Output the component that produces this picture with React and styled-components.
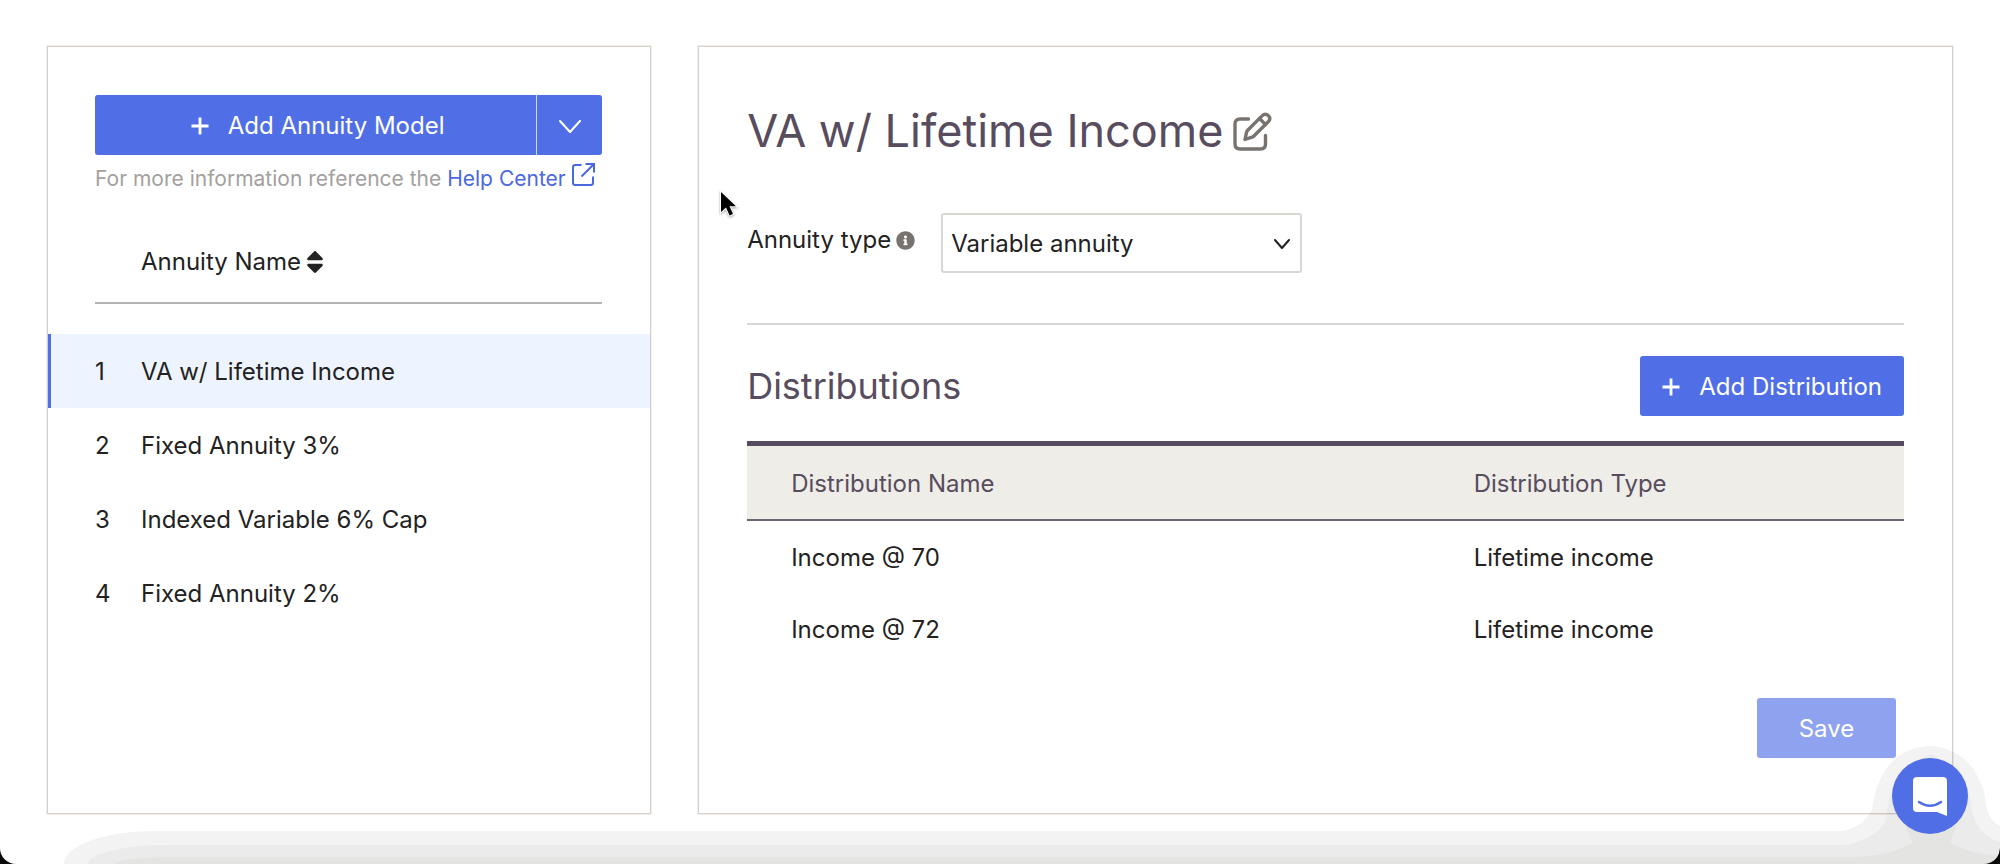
import React, {useState} from 'react';
import styled, {createGlobalStyle} from 'styled-components'
import {FaInfoCircle, FaSort} from 'react-icons/fa'

const GlobalStyle = createGlobalStyle`
  * {
    box-sizing: border-box;
  }
  html {
    background: #0b0b0b;
  }
  body {
    margin: 0;
    font-family: Inter, "Liberation Sans", sans-serif;
    font-size: 24px;
    line-height: 32px;
    color: #222;
  }
  button, select {
    font: inherit;
    color: inherit;
  }
`

const Page = styled.main`
  display: grid;
  grid-template-columns: minmax(0, 13fr) minmax(0, 27fr);
  gap: 47px;
  min-height: 100vh;
  padding: 46px 47px 50px;
  background: #fff;
  border-radius: 0 0 16px 16px;
`

const Panel = styled.section`
  border: 1px solid #d6d0ca;
  outline: 1px solid #f1eeeb;
`

const SidePanel = styled(Panel)`
  padding: 48px 0;
`

const SideInner = styled.div`
  padding: 0 48px 0 47px;
`

const DetailPanel = styled(Panel)`
  padding: 56px 48px 55px;
`

const Button = styled.button`
  display: inline-flex;
  align-items: center;
  justify-content: center;
  gap: ${({$gap}) => $gap || 0}px;
  height: 60px;
  padding: 2px ${({$pad}) => $pad || 0}px 0;
  border: 0;
  border-radius: 3px;
  background: #506fe6;
  color: #fff;
  cursor: pointer;
  &:disabled {
    background: #8ea2f0;
    color: #fff;
    cursor: default;
  }
`

const SplitButton = styled.div`
  display: flex;
  gap: 1px;
  background: #d5d3dc;
  border-radius: 3px;
`

const SplitMain = styled(Button)`
  flex: 1;
  padding-left: 4px;
  border-radius: 3px 0 0 3px;
`

const SplitToggle = styled(Button)`
  width: 65px;
  border-radius: 0 3px 3px 0;
`

const HelpText = styled.p`
  margin: 8px 0 0;
  font-size: 21px;
  line-height: 29px;
  color: #a3a09e;
  white-space: nowrap;
`

const HelpLink = styled.a`
  color: #4a68e0;
  text-decoration: none;
  svg {
    margin-left: 6px;
  }
`

const ListHeader = styled.div`
  display: flex;
  align-items: center;
  height: 85px;
  margin-top: 26px;
  padding-left: 46px;
  border-bottom: 2px solid #b5b3b2;
`

const SortButton = styled.button`
  display: flex;
  align-items: center;
  padding: 2px 0 0;
  border: 0;
  background: none;
  cursor: pointer;
`

const AnnuityList = styled.ol`
  list-style: none;
  margin: 30px 0 0;
  padding: 0;
`

const AnnuityItem = styled.button`
  display: grid;
  grid-template-columns: 46px 1fr;
  align-items: center;
  width: 100%;
  height: 74px;
  padding: 2px 48px 0 44px;
  border: 0;
  border-left: 3px solid ${({$active}) => $active ? '#506fe6' : 'transparent'};
  background: ${({$active}) => $active ? '#eef4ff' : 'transparent'};
  text-align: left;
  cursor: pointer;
`

const TitleRow = styled.header`
  display: flex;
  align-items: center;
  gap: 10px;
`

const Title = styled.h1`
  margin: 0;
  font-size: 45px;
  line-height: 56px;
  font-weight: 400;
  color: #584c5f;
`

const IconButton = styled.button`
  display: flex;
  padding: 0;
  border: 0;
  background: none;
  color: #78736f;
  cursor: pointer;
`

const Field = styled.div`
  display: flex;
  align-items: flex-start;
  gap: 26px;
  margin-top: 54px;
  padding-bottom: 50px;
  border-bottom: 2px solid #dad7d4;
`

const FieldLabel = styled.label`
  display: flex;
  align-items: center;
  gap: 5px;
  padding-top: 11px;
  svg {
    color: #78736f;
  }
`

const SelectWrap = styled.div`
  position: relative;
  width: 361px;
  svg {
    position: absolute;
    top: 26px;
    right: 12px;
    pointer-events: none;
  }
`

const Select = styled.select`
  appearance: none;
  width: 100%;
  height: 60px;
  padding: 2px 40px 0 8px;
  border: 2px solid #dad6d2;
  border-radius: 3px;
  background: #fff;
`

const SectionRow = styled.div`
  display: flex;
  align-items: center;
  justify-content: space-between;
  margin: 31px 0 25px;
`

const SectionTitle = styled.h2`
  margin: 0;
  font-size: 36px;
  line-height: 44px;
  font-weight: 400;
  color: #584c5f;
`

const Table = styled.table`
  width: 100%;
  table-layout: fixed;
  border-collapse: separate;
  border-spacing: 0;
  border-top: 5px solid #594b5f;
`

const Th = styled.th`
  width: ${({$wide}) => $wide ? '59%' : 'auto'};
  height: 75px;
  padding: 2px 44px 0;
  border-bottom: 2px solid #6f6475;
  background: #eeede8;
  font-weight: 400;
  text-align: left;
  color: #584c5f;
`

const Td = styled.td`
  height: 72px;
  padding: 2px 44px 0;
`

const Actions = styled.div`
  display: flex;
  justify-content: flex-end;
  margin-top: 33px;
  padding-right: 8px;
`

const SaveButton = styled(Button)`
  min-width: 139px;
`

// shade along the bottom edge and around the messenger
const BottomShade = styled.div`
  position: fixed;
  left: 64px;
  right: 300px;
  bottom: 0;
  height: 33px;
  overflow: hidden;
  pointer-events: none;
  mix-blend-mode: multiply;
  background: #f3f3f3;
  border-top-left-radius: 90px 33px;
  &::before, &::after {
    content: '';
    position: absolute;
    right: 0;
    bottom: 0;
  }
  &::before {
    left: 24px;
    height: 19px;
    background: #ebebeb;
    border-top-left-radius: 80px 19px;
  }
  &::after {
    left: 50px;
    height: 7px;
    background: #e4e4e2;
    border-top-left-radius: 60px 7px;
  }
`

const CornerShade = styled.svg`
  position: fixed;
  right: 0;
  bottom: 0;
  pointer-events: none;
  mix-blend-mode: multiply;
`

const PageCorner = styled.svg`
  position: fixed;
  right: 0;
  bottom: 0;
`

const Messenger = styled.button`
  position: fixed;
  right: 32px;
  bottom: 30px;
  display: flex;
  align-items: center;
  justify-content: center;
  width: 76px;
  height: 76px;
  padding: 0;
  border: 0;
  border-radius: 50%;
  background: #506fe6;
  cursor: pointer;
`

const Pointer = styled.svg`
  position: fixed;
  left: 717px;
  top: 188px;
  pointer-events: none;
`

const PlusIcon = () => (
  <svg width="18" height="18" viewBox="0 0 18 18" fill="none" stroke="currentColor" strokeWidth="2.8" aria-hidden="true">
    <path d="M9 0.5v17M0.5 9h17"/>
  </svg>
)

const ChevronIcon = ({width, height}) => (
  <svg width={width} height={height} viewBox={`0 0 ${width} ${height}`} fill="none" stroke="currentColor" strokeWidth="2" strokeLinecap="round" strokeLinejoin="round" aria-hidden="true">
    <path d={`M1 1L${width / 2} ${height - 1}L${width - 1} 1`}/>
  </svg>
)

const ExternalIcon = () => (
  <svg width="23" height="23" viewBox="0 0 23 23" fill="none" stroke="currentColor" strokeWidth="2" aria-hidden="true">
    <path d="M9.5 2H3.2Q1 2 1 4.2v15.6Q1 22 3.2 22h15.6Q21 22 21 19.8V13.5"/>
    <path d="M13.5 1H22v8.5M21.5 1.5L9.5 13.5"/>
  </svg>
)

const EditIcon = () => (
  <svg width="39" height="39" viewBox="0 0 39 39" fill="none" stroke="currentColor" strokeWidth="3.4" strokeLinecap="round" strokeLinejoin="round" aria-hidden="true">
    <path d="M15.5 7H7Q2 7 2 12v20Q2 37 7 37h20.500Q32.500 37 32.500 32V23.500"/>
    <path d="M12 27.500l1.600-7.300q.3-1.200 1.100-2L29.300 3.600q2.700-2.700 5.900-.2q3 3 .3 6.100L20.900 24q-.8.800-1.900 1.200z"/>
    <path d="M26.500 6.500l6 6"/>
  </svg>
)

const MessengerIcon = () => (
  <svg width="34" height="39" viewBox="0 0 34 39" aria-hidden="true">
    <path d="M4 0h26q4 0 4 4v35l-10-4H4q-4 0-4-4V4q0-4 4-4z" fill="#fff"/>
    <path d="M6 25q11 7.500 22 0" fill="none" stroke="#506fe6" strokeWidth="2.4" strokeLinecap="round"/>
  </svg>
)

const annuities = [
  {id: 1, name: 'VA w/ Lifetime Income'},
  {id: 2, name: 'Fixed Annuity 3%'},
  {id: 3, name: 'Indexed Variable 6% Cap'},
  {id: 4, name: 'Fixed Annuity 2%'},
]

const distributions = [
  {name: 'Income @ 70', type: 'Lifetime income'},
  {name: 'Income @ 72', type: 'Lifetime income'},
]

const AnnuitySidebar = ({activeId, setActiveId}) => (
  <SidePanel>
    <SideInner>
      <SplitButton>
        <SplitMain type="button" $gap={19}><PlusIcon/>Add Annuity Model</SplitMain>
        <SplitToggle type="button" aria-label="More options"><ChevronIcon width={22} height={13}/></SplitToggle>
      </SplitButton>
      <HelpText>
        For more information reference the <HelpLink href="#help">Help Center<ExternalIcon/></HelpLink>
      </HelpText>
      <ListHeader>
        <SortButton type="button">Annuity Name<FaSort size={28}/></SortButton>
      </ListHeader>
    </SideInner>
    <AnnuityList>
      {annuities.map(({id, name}) =>
        <li key={id}>
          <AnnuityItem type="button" $active={id === activeId} onClick={() => setActiveId(id)}>
            <span>{id}</span>
            <span>{name}</span>
          </AnnuityItem>
        </li>
      )}
    </AnnuityList>
  </SidePanel>
)

const AnnuityDetail = ({title}) => (
  <DetailPanel>
    <TitleRow>
      <Title>{title}</Title>
      <IconButton type="button" aria-label="Edit name"><EditIcon/></IconButton>
    </TitleRow>

    <Field>
      <FieldLabel htmlFor="annuity-type">Annuity type<FaInfoCircle size={19}/></FieldLabel>
      <SelectWrap>
        <Select id="annuity-type" defaultValue="variable">
          <option value="variable">Variable annuity</option>
          <option value="fixed">Fixed annuity</option>
        </Select>
        <ChevronIcon width={16} height={10}/>
      </SelectWrap>
    </Field>

    <SectionRow>
      <SectionTitle>Distributions</SectionTitle>
      <Button type="button" $gap={19} $pad={22}><PlusIcon/>Add Distribution</Button>
    </SectionRow>

    <Table>
      <thead>
        <tr>
          <Th $wide>Distribution Name</Th>
          <Th>Distribution Type</Th>
        </tr>
      </thead>
      <tbody>
        {distributions.map(({name, type}) =>
          <tr key={name}>
            <Td>{name}</Td>
            <Td>{type}</Td>
          </tr>
        )}
      </tbody>
    </Table>

    <Actions>
      <SaveButton type="button" disabled>Save</SaveButton>
    </Actions>
  </DetailPanel>
)

export default function App() {
  const [activeId, setActiveId] = useState(1)
  const active = annuities.find(({id}) => id === activeId)

  return (
    <React.Fragment>
      <GlobalStyle/>
      <Page>
        <AnnuitySidebar activeId={activeId} setActiveId={setActiveId}/>
        <AnnuityDetail title={active.name}/>
      </Page>

      <BottomShade/>
      <CornerShade width="300" height="118" viewBox="0 0 300 118" aria-hidden="true">
        <path fill="#f3f3f4" d="M0 85H143Q164 80 172 64Q174 40 188 20Q206 0 231 0Q258 2 274 24Q286 44 286 60Q290 76 300 80V118H0z"/>
        <path fill="#ebebeb" d="M0 99H146Q176 93 186 75Q187 30 231 8Q270 30 271 60Q276 90 300 96V118H0z"/>
        <path fill="#e4e4e2" d="M0 111H160Q195 108 213 96L205 80H256L250 96Q262 106 300 110V118H0z"/>
      </CornerShade>
      <PageCorner width="16" height="16" viewBox="0 0 16 16" aria-hidden="true">
        <path fill="#0b0b0b" d="M16 0v16H3Q15 14 16 0z"/>
      </PageCorner>
      <Messenger type="button" aria-label="Open messenger"><MessengerIcon/></Messenger>

      <Pointer width="26" height="34" viewBox="0 0 26 34" aria-hidden="true">
        <path d="M4 4v20l5-4.500 3.600 8 3.400-1.500-3.500-7.800h6.500z" fill="#000" stroke="#fff" strokeWidth="2" paintOrder="stroke" filter="drop-shadow(0 1px 1px rgba(0,0,0,.35))"/>
      </Pointer>
    </React.Fragment>
  )
}
